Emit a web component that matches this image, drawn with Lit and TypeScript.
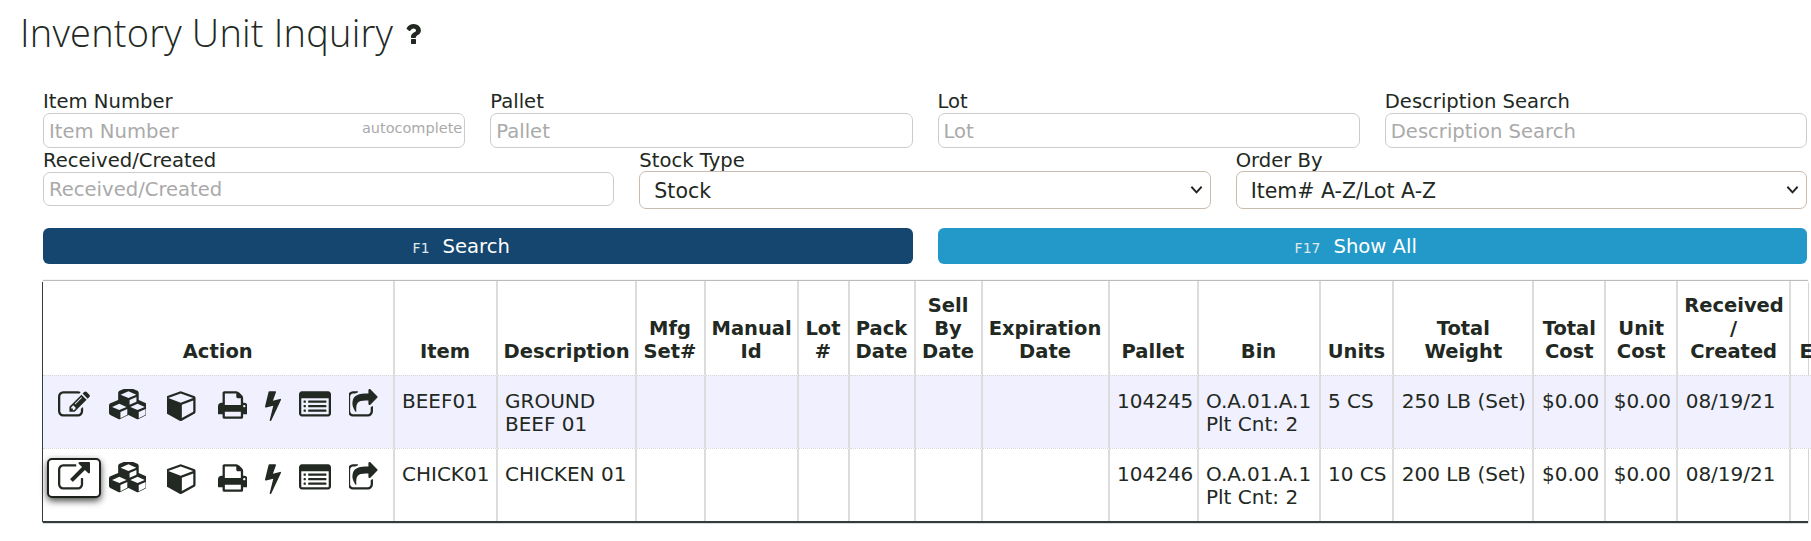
import { LitElement, html, css, svg } from "lit";
import { customElement } from "lit/decorators.js";

const P: Record<string, { vb: string; w: number; d: string }> = {
  edit: { vb: "0 0 1792 1792", w: 32, d: "M888 1184l116-116-152-152-116 116v56h96v96h56zm440-720q-16-16-33 1l-350 350q-17 17-1 33t33-1l350-350q17-17 1-33zm80 594v190q0 119-84.5 203.5t-203.5 84.5h-832q-119 0-203.5-84.5t-84.5-203.5v-832q0-119 84.5-203.5t203.5-84.5h832q63 0 117 25 15 7 18 23 3 17-9 29l-49 49q-14 14-32 8-23-6-45-6h-832q-66 0-113 47t-47 113v832q0 66 47 113t113 47h832q66 0 113-47t47-113v-126q0-13 9-22l64-64q15-15 35-7t20 29zm-96-738l288 288-672 672h-288v-288zm444 132l-92 92-288-288 92-92q28-28 68-28t68 28l152 152q28 28 28 68t-28 68z" },
  ext: { vb: "0 0 1792 1792", w: 32, d: "M1408 928v320q0 119-84.5 203.5t-203.5 84.5h-832q-119 0-203.5-84.5t-84.5-203.5v-832q0-119 84.5-203.5t203.5-84.5h704q14 0 23 9t9 23v64q0 14-9 23t-23 9h-704q-66 0-113 47t-47 113v832q0 66 47 113t113 47h832q66 0 113-47t47-113v-320q0-14 9-23t23-9h64q14 0 23 9t9 23zm384-864v512q0 26-19 45t-45 19-45-19l-176-176-652 652q-10 10-23 10t-23-10l-114-114q-10-10-10-23t10-23l652-652-176-176q-19-19-19-45t19-45 45-19h512q26 0 45 19t19 45z" },
  cubes: { vb: "0 0 2048 1792", w: 36.6, d: "M640 1632l384-192v-314l-384 164v342zm-64-454l404-173-404-173-404 173zm1088 454l384-192v-314l-384 164v342zm-64-454l404-173-404-173-404 173zm-448-293l384-165v-266l-384 164v267zm-64-379l441-189-441-189-441 189zm1088 416v416q0 36-19 67t-52 47l-448 224q-25 14-57 14t-57-14l-448-224q-4-2-7-4-2 2-7 4l-448 224q-25 14-57 14t-57-14l-448-224q-33-16-52-47t-19-67v-416q0-38 21.5-70t56.5-48l434-186v-400q0-38 21.5-70t56.5-48l448-192q23-10 50-10t50 10l448 192q35 16 56.5 48t21.5 70v400l434 186q36 16 57 48t21 70z" },
  cube: { vb: "64 0 1664 1792", w: 29.7, d: "M896 1629l640-349v-636l-640 233v752zm-64-865l698-254-698-254-698 254zm832-252v768q0 35-18 65t-49 47l-704 384q-28 16-61 16t-61-16l-704-384q-31-17-49-47t-18-65v-768q0-40 23-73t61-47l704-256q22-8 44-8t44 8l704 256q38 14 61 47t23 73z" },
  print: { vb: "64 0 1664 1792", w: 29.7, d: "M448 1536h896v-256h-896v256zm0-640h896v-384h-160q-40 0-68-28t-28-68v-160h-640v640zm1152 64q0-26-19-45t-45-19-45 19-19 45 19 45 45 19 45-19 19-45zm128 0v416q0 13-9.5 22.5t-22.5 9.5h-224v160q0 40-28 68t-68 28h-960q-40 0-68-28t-28-68v-160h-224q-13 0-22.5-9.5t-9.5-22.5v-416q0-79 56.5-135.5t135.5-56.5h64v-544q0-40 28-68t68-28h672q40 0 88 20t76 48l152 152q28 28 48 76t20 88v256h64q79 0 135.5 56.5t56.5 135.5z" },
  bolt: { vb: "448 0 896 1792", w: 16, d: "M1333 566q18 20 7 44l-540 1157q-13 25-42 25-4 0-14-2-17-5-25.5-19t-4.5-30l197-808-406 101q-4 1-12 1-18 0-31-11-18-15-13-39l201-825q4-14 16-23t28-9h328q19 0 32 12.5t13 29.5q0 8-5 18l-171 463 396-98q8-2 12-2 19 0 34 15z" },
  list: { vb: "0 0 1792 1792", w: 32, d: "M384 1184v64q0 13-9.5 22.5t-22.5 9.5h-64q-13 0-22.5-9.5t-9.5-22.5v-64q0-13 9.5-22.5t22.5-9.5h64q13 0 22.5 9.5t9.5 22.5zm0-256v64q0 13-9.5 22.5t-22.5 9.5h-64q-13 0-22.5-9.5t-9.5-22.5v-64q0-13 9.5-22.5t22.5-9.5h64q13 0 22.5 9.5t9.5 22.5zm0-256v64q0 13-9.5 22.5t-22.5 9.5h-64q-13 0-22.5-9.5t-9.5-22.5v-64q0-13 9.5-22.5t22.5-9.5h64q13 0 22.5 9.5t9.5 22.5zm1152 512v64q0 13-9.5 22.5t-22.5 9.5h-960q-13 0-22.5-9.5t-9.5-22.5v-64q0-13 9.5-22.5t22.5-9.5h960q13 0 22.5 9.5t9.5 22.5zm0-256v64q0 13-9.5 22.5t-22.5 9.5h-960q-13 0-22.5-9.5t-9.5-22.5v-64q0-13 9.5-22.5t22.5-9.5h960q13 0 22.5 9.5t9.5 22.5zm0-256v64q0 13-9.5 22.5t-22.5 9.5h-960q-13 0-22.5-9.5t-9.5-22.5v-64q0-13 9.5-22.5t22.5-9.5h960q13 0 22.5 9.5t9.5 22.5zm128 704v-832q0-13-9.5-22.5t-22.5-9.5h-1472q-13 0-22.5 9.5t-9.5 22.5v832q0 13 9.5 22.5t22.5 9.5h1472q13 0 22.5-9.5t9.5-22.5zm128-1088v1088q0 66-47 113t-113 47h-1472q-66 0-113-47t-47-113v-1088q0-66 47-113t113-47h1472q66 0 113 47t47 113z" },
  share: { vb: "128 0 1664 1792", w: 29.7, d: "M1472 989v259q0 119-84.5 203.5t-203.5 84.5h-832q-119 0-203.5-84.5t-84.5-203.5v-832q0-119 84.5-203.5t203.5-84.5h255q13 0 22.5 9.5t9.5 22.5q0 27-26 32-77 26-133 60-10 4-16 4h-112q-66 0-113 47t-47 113v832q0 66 47 113t113 47h832q66 0 113-47t47-113v-214q0-19 18-29 28-13 54-37 16-16 35-8 21 9 21 29zm237-496l-384 384q-18 19-45 19-12 0-25-5-39-17-39-59v-192h-160q-323 0-438 131-119 137-74 473 3 23-20 34-8 2-12 2-16 0-26-13-10-14-21-31t-39.5-68.5-49.5-99.5-38.5-114-17.5-122q0-49 3.5-91t14-90 28-88 47-81.5 68.5-74 94.5-61.5 124.5-48.5 159.5-30.5 196.5-11h160v-192q0-42 39-59 13-5 25-5 26 0 45 19l384 384q19 19 19 45t-19 45z" },
  question: { vb: "0 0 1792 1792", w: 28, d: "M1088 1256v240q0 16-12 28t-28 12h-240q-16 0-28-12t-12-28v-240q0-16 12-28t28-12h240q16 0 28 12t12 28zm316-600q0 54-15.5 101t-35 76.5-55 59.5-57.5 43.5-61 35.5q-41 23-68.5 65t-27.5 67q0 17-12 32.5t-28 15.5h-240q-15 0-25.5-18.5t-10.5-37.5v-45q0-83 65-156.5t143-108.5q59-27 84-56t25-76q0-42-46.5-74t-107.5-32q-65 0-108 29-35 25-107 115-13 16-31 16-12 0-25-8l-164-125q-13-10-15.5-25t5.5-28q160-266 464-266 80 0 161 31t146 83 102 127.5 37 158.5z" },
};

function icon(name: string) {
  const p = P[name];
  return html`<svg class="ico" viewBox=${p.vb} style="width:${p.w}px" fill="currentColor">${svg`<path d=${p.d}></path>`}</svg>`;
}

const COLS = [351.5, 103, 139, 69, 93, 51, 66, 67, 127, 89, 122, 73.7, 140.3, 71.7, 72, 113, 32];
const HEAD = ["Action", "Item", "Description", "Mfg Set#", "Manual Id", "Lot #", "Pack Date", "Sell By Date", "Expiration Date", "Pallet", "Bin", "Units", "Total Weight", "Total Cost", "Unit Cost", "Received / Created", "E"];
const ROWS = [
  { first: "edit", item: "BEEF01", desc: "GROUND BEEF 01", pallet: "104245", units: "5 CS", weight: "250 LB (Set)" },
  { first: "ext", item: "CHICK01", desc: "CHICKEN 01", pallet: "104246", units: "10 CS", weight: "200 LB (Set)" },
];
/* Each action icon with its left margin after the previous icon. */
const ACTIONS = [
  { n: "cubes", gap: 19.3 },
  { n: "cube", gap: 21.6 },
  { n: "print", gap: 20.4 },
  { n: "bolt", gap: 17.6 },
  { n: "list", gap: 17.7 },
  { n: "share", gap: 18 },
];

const CHEVRON = "url(\"data:image/svg+xml,%3Csvg xmlns='http://www.w3.org/2000/svg' viewBox='0 0 14 10'%3E%3Cpath d='M1.5 1.5 7 7.5l5.5-6' fill='none' stroke='%23222' stroke-width='2'/%3E%3C/svg%3E\")";

@customElement("app-root")
export class AppRoot extends LitElement {
  static styles = css`
    :host { display: block; font-family: "DejaVu Sans", "Noto Sans", sans-serif; color: #222822; background: #fff; height: 541px; overflow: hidden; font-size: 20px; }
    h1 { margin: 0; display: flex; align-items: flex-start; height: 88px; padding-left: 20px; font-family: "Open Sans", "Noto Sans", sans-serif; font-weight: 350; font-size: 38px; letter-spacing: 0.2px; line-height: 48px; color: #222822; }
    h1 span { padding-top: 8px; }
    h1 .q { margin: 20px 0 0 6px; height: 28px; }
    h1 .q .ico { height: 28px; display: block; }
    .form { margin-left: 43px; width: 1764px; }
    .row { display: grid; gap: 0 25px; }
    .r4 { grid-template-columns: repeat(4, 1fr); }
    .r3 { grid-template-columns: repeat(3, 1fr); }
    .field { display: flex; flex-direction: column; position: relative; }
    label { height: 25px; line-height: 27px; font-size: 19.6px; }
    .r3 label { height: 24px; line-height: 25px; }
    input, select { box-sizing: border-box; width: 100%; font: inherit; border: 1px solid #ccc; border-radius: 7px; background: #fff; color: #222822; outline: none; }
    input { height: 35px; padding: 1px 5px 0; font-size: 19.6px; }
    .r3 input { height: 34px; }
    input::placeholder { color: #aaa; opacity: 1; }
    select { appearance: none; height: 38px; padding: 2px 28px 0 14px; font-size: 20.5px; border-color: #c9bcae; margin-top: -1px; background-repeat: no-repeat; background-position: right 7px center; background-size: 13px 10px; }
    .auto { position: absolute; right: 3px; top: 31px; font-size: 14.5px; line-height: 18px; color: #aaa; }
    .btns { display: grid; grid-template-columns: 1fr 1fr; gap: 25px; margin-top: 19px; }
    .btn { height: 36px; border: 0; border-radius: 6px; color: #fff; font: inherit; font-size: 19.6px; display: flex; align-items: center; justify-content: center; gap: 13px; padding: 0 33px 0 0; }
    .btn small { font-size: 14px; color: #dfe8ee; padding-top: 3px; }
    .navy { background: #15466f; }
    .sky { background: #2299c8; }
    .wrap { box-sizing: border-box; margin: 17px 0 0 43px; width: 1765px; height: 240px; box-shadow: -1px 1px 0 #333c3c, 0 2px 1px #333c3c, 0 -1px 1px #bbb; background: #fff; }
    table { border-collapse: separate; border-spacing: 0; table-layout: fixed; width: 1779px; }
    th, td { padding: 0 6px; border-right: 2px solid #dcdcdc; vertical-align: top; box-sizing: border-box; line-height: 23px; }
    th { height: 94px; vertical-align: bottom; text-align: center; font-weight: 700; font-size: 19.5px; padding-bottom: 12px; }
    td { height: 73px; padding: 14px 2px 0 7.5px; border-top: 1px dotted #d8d8d8; }
    tr:nth-child(2n+1) td { background: #f0f0ff; }
    .acts { display: flex; padding-left: 15px; margin-top: -1px; }
    .acts .ico { height: 32px; display: block; flex: none; }
    .ab { display: block; flex: none; }
    .focus { border: 2px solid #1c211c; border-radius: 5px; padding: 2px 9px; margin: -4px -11px; background: #fff; box-shadow: 0 3px 7px rgba(0,0,0,.7); }
    td.a { padding: 14px 0 0; }
  `;

  render() {
    const arrow = `background-image:${CHEVRON}`;
    return html`
      <h1><span>Inventory Unit Inquiry</span><div class="q">${icon("question")}</div></h1>
      <div class="form">
        <div class="row r4">
          <div class="field"><label>Item Number</label><input placeholder="Item Number" /><span class="auto">autocomplete</span></div>
          <div class="field"><label>Pallet</label><input placeholder="Pallet" /></div>
          <div class="field"><label>Lot</label><input placeholder="Lot" /></div>
          <div class="field"><label>Description Search</label><input placeholder="Description Search" /></div>
        </div>
        <div class="row r3">
          <div class="field"><label>Received/Created</label><input placeholder="Received/Created" /></div>
          <div class="field"><label>Stock Type</label><select style=${arrow}><option>Stock</option></select></div>
          <div class="field"><label>Order By</label><select style=${arrow}><option>Item# A-Z/Lot A-Z</option></select></div>
        </div>
        <div class="btns">
          <button class="btn navy"><small>F1</small>Search</button>
          <button class="btn sky"><small>F17</small>Show All</button>
        </div>
      </div>
      <div class="wrap">
        <table>
          <colgroup>${COLS.map((w) => html`<col style="width:${w}px" />`)}</colgroup>
          <thead><tr>${HEAD.map((h) => html`<th>${h}</th>`)}</tr></thead>
          <tbody>
            ${ROWS.map((r) => html`<tr>
              <td class="a"><div class="acts">
                <span class="ab ${r.first === "ext" ? "focus" : ""}">${icon(r.first)}</span>
                ${ACTIONS.map((a) => html`<span class="ab" style="margin-left:${a.gap}px">${icon(a.n)}</span>`)}
              </div></td>
              <td>${r.item}</td><td>${r.desc}</td><td></td><td></td><td></td><td></td><td></td><td></td>
              <td>${r.pallet}</td><td>O.A.01.A.1<br />Plt Cnt: 2</td><td>${r.units}</td><td>${r.weight}</td>
              <td>$0.00</td><td>$0.00</td><td>08/19/21</td><td></td>
            </tr>`)}
          </tbody>
        </table>
      </div>
    `;
  }
}
